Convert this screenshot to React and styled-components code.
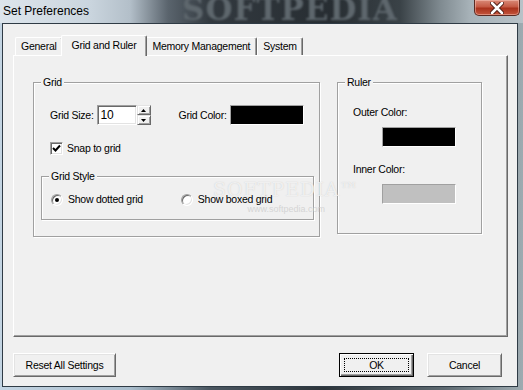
import React from "react";
import styled, { createGlobalStyle } from "styled-components";

const GlobalStyle = createGlobalStyle`
  html, body { margin: 0; padding: 0; background: #fff; }
  body {
    font-family: "Liberation Sans", Arial, sans-serif;
    font-size: 10.5px;
    letter-spacing: -0.25px;
    color: #000;
  }
`;

const Window = styled.div`
  position: relative;
  width: 523px;
  height: 390px;
  box-sizing: border-box;
  padding: 0 5px 3px 2px;
  display: flex;
  flex-direction: column;
  overflow: hidden;
  background: linear-gradient(90deg, #c3d4e2 0%, #a9bdcc 25%, #4b5761 40%, #2d353b 62%, #5e6a71 85%, #9eabb1 100%);
`;

const TitleBar = styled.div`
  height: 23px;
  margin: 0 -5px 0 -2px;
  display: flex;
  align-items: flex-start;
  overflow: hidden;
  background: linear-gradient(90deg, #dde5ec 0px, #cad5de 90px, #b3bfc9 130px, #5a646d 168px, #32393f 210px, #272d32 330px, #3a4247 400px, #7f8a90 440px, #a7b2b8 470px, #b8c2c8 523px);
`;

const Title = styled.div`
  padding: 4px 0 0 3px;
  font-size: 12px;
  letter-spacing: 0;
  line-height: 14px;
  color: #000;
  white-space: nowrap;
`;

const TitleMark = styled.div`
  flex: 1;
  padding-left: 93px;
  margin-top: -9px;
  font-family: "DejaVu Serif", "Liberation Serif", serif;
  font-weight: bold;
  font-size: 31px;
  letter-spacing: 1px;
  color: #5e676d;
  filter: blur(1px);
  white-space: nowrap;
`;

const CloseButton = styled.div`
  width: 46px;
  height: 16px;
  margin-right: 3px;
  box-sizing: border-box;
  border: 1px solid #5a2a22;
  border-top: none;
  border-radius: 0 0 5px 5px;
  background: linear-gradient(180deg, #d98a78 0%, #c55a44 45%, #a9321c 55%, #c4553c 100%);
  box-shadow: inset 0 0 0 1px rgba(255, 210, 200, 0.45);
  display: flex;
  align-items: center;
  justify-content: center;
`;

const Client = styled.div`
  flex: 1;
  display: flex;
  flex-direction: column;
  border: 1px solid #2f3b45;
  background: #f0f0f0;
  padding: 11px 9px 9px 10px;
`;

const TabStrip = styled.div`
  height: 20px;
  display: flex;
  align-items: flex-end;
  padding-left: 2px;
`;

const Tab = styled.div`
  position: relative;
  z-index: ${p => (p.$active ? 2 : 1)};
  height: ${p => (p.$active ? 21 : 18)}px;
  margin: 0 ${p => (p.$active ? -2 : 0)}px ${p => (p.$active ? -1 : 0)}px;
  padding: 0 ${p => (p.$active ? 10 : p.$pad || 5)}px ${p => (p.$active ? 3 : 1)}px;
  box-sizing: border-box;
  display: flex;
  align-items: center;
  background: #f0f0f0;
  border-top: 1px solid #fff;
  border-left: 1px solid #fff;
  border-right: 1px solid #696969;
  box-shadow: inset -1px 0 0 #a0a0a0;
  border-radius: 2px 2px 0 0;
  white-space: nowrap;
`;

const Panel = styled.div`
  height: 282px;
  box-sizing: border-box;
  display: flex;
  gap: 17px;
  padding: 20px 0 0 19px;
  border-top: 1px solid #fff;
  border-left: 1px solid #fff;
  border-right: 1px solid #696969;
  border-bottom: 1px solid #696969;
  box-shadow: inset -1px -1px 0 #a0a0a0;
`;

const Group = styled.fieldset`
  margin: ${p => p.$margin || 0};
  padding: 0;
  min-width: 0;
  width: ${p => p.$w}px;
  height: ${p => p.$h}px;
  box-sizing: border-box;
  border: 1px solid #a0a0a0;
  box-shadow: 1px 1px 0 #fff, inset 1px 1px 0 #fff;
`;

const Legend = styled.legend`
  margin-left: 7px;
  padding: 0 2px;
  line-height: 13px;
  background: #f0f0f0;
`;

const GroupBody = styled.div`
  padding: ${p => p.$pad};
  display: flex;
  flex-direction: column;
`;

const Row = styled.div`
  display: flex;
  align-items: center;
  height: ${p => p.$h || 13}px;
  margin-top: ${p => p.$top || 0}px;
  padding-left: ${p => p.$indent || 0}px;
`;

const Label = styled.span`
  line-height: 13px;
  white-space: nowrap;
  margin-left: ${p => p.$left || 0}px;
  margin-right: ${p => p.$right || 0}px;
`;

const NumberField = styled.div`
  width: 40px;
  height: 20px;
  box-sizing: border-box;
  padding-left: 3px;
  display: flex;
  align-items: center;
  font-size: 12px;
  background: #fff;
  border-top: 1px solid #a0a0a0;
  border-left: 1px solid #a0a0a0;
  border-right: 1px solid #fff;
  border-bottom: 1px solid #fff;
  box-shadow: inset 1px 1px 0 #696969, inset -1px -1px 0 #e3e3e3;
`;

const Spinner = styled.div`
  display: flex;
  flex-direction: column;
`;

const SpinButton = styled.div`
  width: 14px;
  height: 10px;
  box-sizing: border-box;
  display: flex;
  align-items: center;
  justify-content: center;
  background: #f0f0f0;
  border-top: 1px solid #e3e3e3;
  border-left: 1px solid #e3e3e3;
  border-right: 1px solid #696969;
  border-bottom: 1px solid #696969;
  box-shadow: inset 1px 1px 0 #fff, inset -1px -1px 0 #a0a0a0;
`;

const Swatch = styled.div`
  width: 74px;
  height: 20px;
  box-sizing: border-box;
  margin-left: ${p => p.$left || 0}px;
  margin-top: ${p => p.$top || 0}px;
  background: ${p => p.$color};
  border-top: 1px solid #a0a0a0;
  border-left: 1px solid #a0a0a0;
  border-right: 1px solid #fff;
  border-bottom: 1px solid #fff;
`;

const CheckBox = styled.div`
  width: 13px;
  height: 13px;
  box-sizing: border-box;
  background: #fff;
  border-top: 1px solid #a0a0a0;
  border-left: 1px solid #a0a0a0;
  border-right: 1px solid #fff;
  border-bottom: 1px solid #fff;
  box-shadow: inset 1px 1px 0 #696969, inset -1px -1px 0 #e3e3e3;
  display: flex;
  align-items: center;
  justify-content: center;
  margin-right: 4px;
`;

const Radio = styled.div`
  width: 12px;
  height: 12px;
  box-sizing: border-box;
  border-radius: 50%;
  background: #fff;
  border: 1px solid;
  border-color: #a0a0a0 #fff #fff #a0a0a0;
  box-shadow: inset 1px 1px 0 #696969, inset -1px -1px 0 #e3e3e3;
  display: flex;
  align-items: center;
  justify-content: center;
  margin: 0 5px 0 ${p => p.$left || 0}px;
`;

const Dot = styled.div`
  width: 4px;
  height: 4px;
  border-radius: 50%;
  background: #000;
`;

const RulerItem = styled.div`
  display: flex;
  flex-direction: column;
  align-items: flex-start;
  margin-top: ${p => p.$top}px;
`;

const ButtonRow = styled.div`
  display: flex;
  margin-top: 16px;
  padding-right: 6px;
`;

const Button = styled.div`
  width: ${p => p.$w}px;
  height: 24px;
  box-sizing: border-box;
  margin-left: ${p => p.$left || 0}px;
  display: flex;
  align-items: center;
  justify-content: center;
  background: #f0f0f0;
  border-top: 1px solid ${p => (p.$default ? "#000" : "#fff")};
  border-left: 1px solid ${p => (p.$default ? "#000" : "#fff")};
  border-right: 1px solid ${p => (p.$default ? "#000" : "#696969")};
  border-bottom: 1px solid ${p => (p.$default ? "#000" : "#696969")};
  box-shadow: ${p =>
    p.$default
      ? "inset 1px 1px 0 #fff, inset -1px -1px 0 #696969, inset -2px -2px 0 #a0a0a0"
      : "inset 1px 1px 0 #e3e3e3, inset -1px -1px 0 #a0a0a0"};
  white-space: nowrap;
`;

const FocusRect = styled.div`
  width: calc(100% - 8px);
  height: calc(100% - 8px);
  box-sizing: border-box;
  border: 1px dotted #000;
  display: flex;
  align-items: center;
  justify-content: center;
`;

const Spacer = styled.div`
  flex: 1;
`;

const Watermark = styled.div`
  position: absolute;
  left: 213px;
  top: 178px;
  pointer-events: none;
  display: flex;
  flex-direction: column;
  align-items: center;
`;

const WatermarkLogo = styled.div`
  font-family: "DejaVu Serif", "Liberation Serif", serif;
  font-size: 19px;
  letter-spacing: 1px;
  color: rgba(255, 255, 255, 0.7);
  text-shadow: 0 0 1px rgba(160, 160, 160, 0.5);
`;

const WatermarkUrl = styled.div`
  margin-top: 4px;
  font-size: 9px;
  letter-spacing: 0;
  color: rgba(205, 205, 205, 0.8);
`;

function ArrowUp() {
  return (
    <svg width="5" height="3" viewBox="0 0 5 3">
      <polygon points="2.5,0 5,3 0,3" fill="#000" />
    </svg>
  );
}

function ArrowDown() {
  return (
    <svg width="5" height="3" viewBox="0 0 5 3">
      <polygon points="0,0 5,0 2.5,3" fill="#000" />
    </svg>
  );
}

function CheckMark() {
  return (
    <svg width="9" height="9" viewBox="0 0 9 9">
      <path d="M1 4 L3.5 6.5 L8 1.5" fill="none" stroke="#000" strokeWidth="2" />
    </svg>
  );
}

function CloseX() {
  return (
    <svg width="14" height="12" viewBox="0 0 14 12">
      <path d="M2 1 L12 11 M12 1 L2 11" stroke="#4a1a12" strokeWidth="4.5" strokeLinecap="round" />
      <path d="M2 1 L12 11 M12 1 L2 11" stroke="#fff" strokeWidth="2.5" strokeLinecap="round" />
    </svg>
  );
}

export default function App() {
  return (
    <React.Fragment>
      <GlobalStyle />
      <Window>
        <TitleBar>
          <Title>Set Preferences</Title>
          <TitleMark>SOFTPEDIA</TitleMark>
          <CloseButton>
            <CloseX />
          </CloseButton>
        </TitleBar>
        <Client>
          <TabStrip>
            <Tab>General</Tab>
            <Tab $active>Grid and Ruler</Tab>
            <Tab $pad={6}>Memory Management</Tab>
            <Tab>System</Tab>
          </TabStrip>
          <Panel>
            <Group $w={287} $h={161}>
              <Legend>Grid</Legend>
              <GroupBody $pad="16px 0 0 7px">
                <Row $h={20} $indent={9}>
                  <Label $right={3}>Grid Size:</Label>
                  <NumberField>10</NumberField>
                  <Spinner>
                    <SpinButton>
                      <ArrowUp />
                    </SpinButton>
                    <SpinButton>
                      <ArrowDown />
                    </SpinButton>
                  </Spinner>
                  <Label $left={28} $right={3}>Grid Color:</Label>
                  <Swatch $color="#000" />
                </Row>
                <Row $top={17} $indent={9}>
                  <CheckBox>
                    <CheckMark />
                  </CheckBox>
                  <Label>Snap to grid</Label>
                </Row>
                <Group $w={273} $h={50} $margin="15px 0 0 0">
                  <Legend>Grid Style</Legend>
                  <GroupBody $pad="10px 0 0 9px">
                    <Row>
                      <Radio>
                        <Dot />
                      </Radio>
                      <Label>Show dotted grid</Label>
                      <Radio $left={38} />
                      <Label>Show boxed grid</Label>
                    </Row>
                  </GroupBody>
                </Group>
              </GroupBody>
            </Group>
            <Group $w={145} $h={158}>
              <Legend>Ruler</Legend>
              <GroupBody $pad="17px 0 0 15px">
                <RulerItem $top={0}>
                  <Label>Outer Color:</Label>
                  <Swatch $color="#000" $left={29} $top={8} />
                </RulerItem>
                <RulerItem $top={16}>
                  <Label>Inner Color:</Label>
                  <Swatch $color="#c0c0c0" $left={29} $top={8} />
                </RulerItem>
              </GroupBody>
            </Group>
          </Panel>
          <ButtonRow>
            <Button $w={103}>Reset All Settings</Button>
            <Spacer />
            <Button $w={75} $default>
              <FocusRect>OK</FocusRect>
            </Button>
            <Button $w={75} $left={13}>Cancel</Button>
          </ButtonRow>
        </Client>
        <Watermark>
          <WatermarkLogo>SOFTPEDIA™</WatermarkLogo>
          <WatermarkUrl>www.softpedia.com</WatermarkUrl>
        </Watermark>
      </Window>
    </React.Fragment>
  );
}
